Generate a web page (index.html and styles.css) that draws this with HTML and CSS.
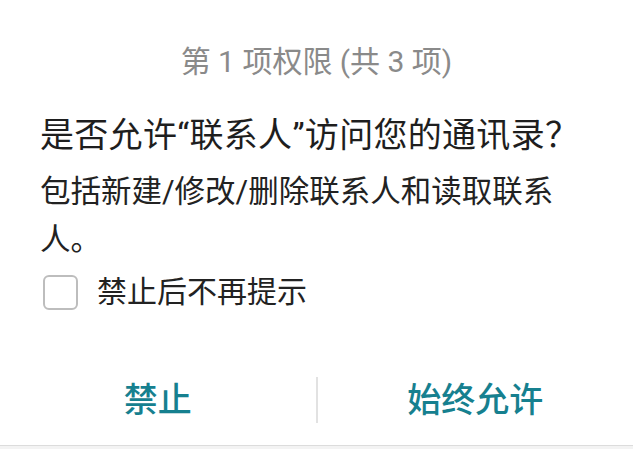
FILE: index.html
```html
<!DOCTYPE html>
<html lang="zh-CN">
<head>
<meta charset="utf-8">
<link rel="stylesheet" href="styles.css">
</head>
<body>
<div class="dialog">
  <div class="header">第 1 项权限 (共 3 项)</div>
  <div class="content">
    <div class="title">是否允许“联系人”访问您的通讯录？</div>
    <div class="desc">包括新建/修改/删除联系人和读取联系人。</div>
    <label class="check-row">
      <span class="checkbox"></span>
      <span class="check-label">禁止后不再提示</span>
    </label>
  </div>
  <div class="actions">
    <div class="btn">禁止</div>
    <div class="divider"></div>
    <div class="btn">始终允许</div>
  </div>
</div>
</body>
</html>
```
FILE: styles.css
```css
html, body {
  margin: 0;
  padding: 0;
}
body {
  background: #f3f3f3;
  font-family: Roboto, "Noto Sans CJK SC", sans-serif;
  width: 633px;
  height: 449px;
  overflow: hidden;
}
.dialog {
  background: #ffffff;
  height: 446px;
  border-bottom: 1px solid #dcdcdc;
  display: flex;
  flex-direction: column;
  box-sizing: border-box;
}
.header {
  padding-top: 42px;
  font-size: 30px;
  line-height: 40px;
  color: #8a8a8a;
  text-align: center;
}
.content {
  padding: 0 53px 0 40px;
  display: flex;
  flex-direction: column;
}
.title {
  margin-top: 30px;
  font-size: 34px;
  line-height: 46px;
  letter-spacing: 0.3px;
  color: #1e1e1e;
  white-space: nowrap;
}
.desc {
  margin-top: 10px;
  font-size: 30.5px;
  line-height: 48px;
  color: #222222;
}
.check-row {
  margin-top: 10px;
  display: flex;
  align-items: center;
  height: 36px;
}
.checkbox {
  width: 31px;
  height: 31px;
  margin-left: 3px;
  border: 2px solid #bdbdbd;
  border-radius: 6px;
  flex: none;
}
.check-label {
  margin-left: 19px;
  font-size: 30px;
  line-height: 36px;
  color: #222222;
}
.actions {
  margin-top: 50px;
  height: 80px;
  display: flex;
  align-items: center;
}
.btn {
  flex: 1;
  text-align: center;
  font-size: 34px;
  line-height: 80px;
  font-weight: 500;
  color: #16808f;
}
.divider {
  width: 2px;
  height: 46px;
  background: #e2e2e2;
  flex: none;
}
```
